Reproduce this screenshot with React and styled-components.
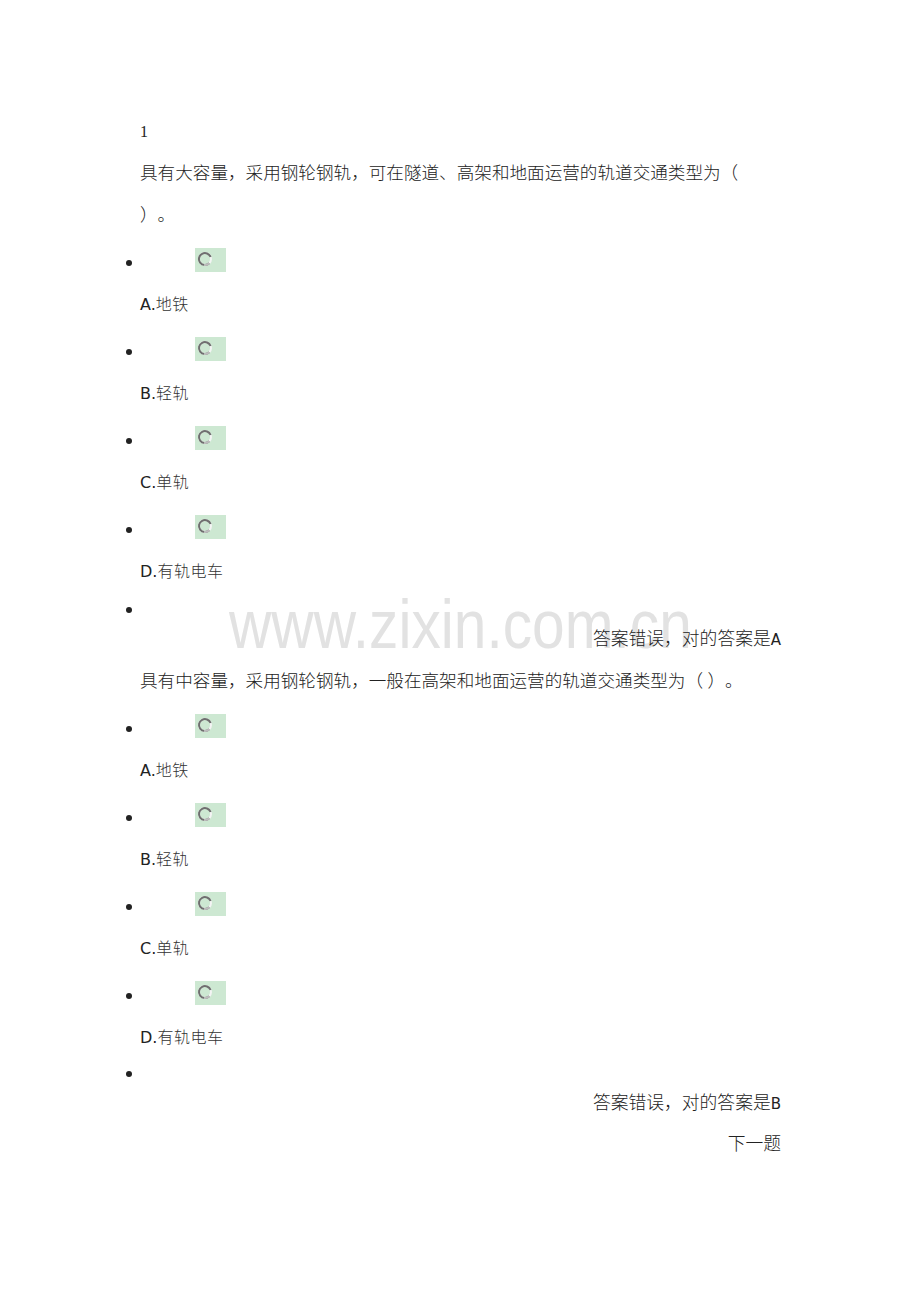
import React from "react";
import styled, { createGlobalStyle } from "styled-components";

const Global = createGlobalStyle`
  html, body { margin: 0; padding: 0; background: #fff; }
  body { font-family: "DejaVu Sans", "Noto Sans CJK SC", sans-serif; text-spacing-trim: space-all; }
`;

const Page = styled.div`
  position: relative;
  width: 920px;
  height: 1302px;
  padding: 112px 0 0 140px;
  box-sizing: border-box;
  overflow: hidden;
`;

const Column = styled.div`
  width: 641px;
  display: flex;
  flex-direction: column;
`;

const Number = styled.div`
  height: 40px;
  line-height: 40px;
  font-family: "Liberation Serif", "Noto Sans CJK SC", serif;
  font-size: 16px;
  color: #222;
`;

const Question = styled.div`
  height: ${(p) => p.$h}px;
  line-height: ${(p) => p.$lh}px;
  font-family: "Liberation Serif", "Noto Sans CJK SC", serif;
  font-size: 17.6px;
  font-weight: 300;
  color: #222;
  white-space: nowrap;
  text-spacing-trim: space-all;
`;

const OptionRow = styled.div`
  height: 44px;
  display: flex;
  align-items: center;
  margin-left: -14px;
`;

const Dot = styled.span`
  width: 6px;
  height: 6px;
  border-radius: 50%;
  background: #222;
  margin-top: 6px;
  flex: none;
`;

const RadioBox = styled.span`
  width: 31px;
  height: 24px;
  margin-left: 63px;
  background: #cde8d2;
  display: flex;
  align-items: flex-start;
  padding: 3px 0 0 2px;
  box-sizing: border-box;
`;

const Label = styled.div`
  height: 45px;
  line-height: 45px;
  font-size: 16px;
  font-weight: 300;
  color: #333;
  letter-spacing: 0.5px;
`;

const Key = styled.span`
  font-family: "DejaVu Sans", sans-serif;
  font-weight: 400;
  color: #222;
  letter-spacing: 0;
`;

const BulletOnly = styled.div`
  height: ${(p) => p.$h}px;
  display: flex;
  align-items: center;
  margin-left: -14px;
`;

const Answer = styled.div`
  height: ${(p) => p.$h}px;
  line-height: ${(p) => p.$h}px;
  text-align: right;
  font-family: "Liberation Serif", "Noto Sans CJK SC", serif;
  font-size: 17.8px;
  font-weight: 300;
  color: #222;
  position: relative;
  z-index: 1;
`;

const Letter = styled.span`
  font-family: "DejaVu Sans", sans-serif;
  font-size: 15px;
  font-weight: 400;
`;

const Next = styled.div`
  height: 40px;
  line-height: 40px;
  text-align: right;
  font-family: "Liberation Serif", "Noto Sans CJK SC", serif;
  font-size: 17.8px;
  font-weight: 300;
  color: #222;
`;

const Watermark = styled.div`
  position: absolute;
  left: 229px;
  top: 589px;
  font-family: "Liberation Sans", Arial, sans-serif;
  font-size: 69px;
  line-height: 72px;
  color: #e2e2e2;
  transform: scaleX(0.85);
  transform-origin: left center;
  white-space: nowrap;
  pointer-events: none;
`;

function Ring() {
  return (
    <svg width="16" height="16" viewBox="0 0 16 16">
      <circle cx="8" cy="8" r="6" fill="none" stroke="#f4f4f4" strokeWidth="2" />
      <path d="M13.6 6 A6 6 0 1 0 12.2 12.3" fill="none" stroke="#6f6f6f" strokeWidth="2" />
      <path d="M12.2 12.3 A6 6 0 0 1 7 13.9" fill="none" stroke="#bdbdbd" strokeWidth="2" />
    </svg>
  );
}

function Option({ letter, text }) {
  return (
    <>
      <OptionRow>
        <Dot />
        <RadioBox>
          <Ring />
        </RadioBox>
      </OptionRow>
      <Label>
        <Key>{letter}.</Key>
        {text}
      </Label>
    </>
  );
}

const options = [
  ["A", "地铁"],
  ["B", "轻轨"],
  ["C", "单轨"],
  ["D", "有轨电车"],
];

export default function App() {
  return (
    <>
      <Global />
      <Page>
        <Watermark>www.zixin.com.cn</Watermark>
        <Column>
          <Number>1</Number>
          <Question $h={86} $lh={42}>
            具有大容量，采用钢轮钢轨，可在隧道、高架和地面运营的轨道交通类型为（
            <br />
            ）。
          </Question>
          {options.map(([l, t]) => (
            <Option key={"a" + l} letter={l} text={t} />
          ))}
          <BulletOnly $h={26}>
            <Dot />
          </BulletOnly>
          <Answer $h={38}>
            答案错误，对的答案是<Letter>A</Letter>
          </Answer>
          <Question $h={46} $lh={46}>
            具有中容量，采用钢轮钢轨，一般在高架和地面运营的轨道交通类型为（ ）。
          </Question>
          {options.map(([l, t]) => (
            <Option key={"b" + l} letter={l} text={t} />
          ))}
          <BulletOnly $h={22}>
            <Dot />
          </BulletOnly>
          <Answer $h={42}>
            答案错误，对的答案是<Letter>B</Letter>
          </Answer>
          <Next>下一题</Next>
        </Column>
      </Page>
    </>
  );
}
